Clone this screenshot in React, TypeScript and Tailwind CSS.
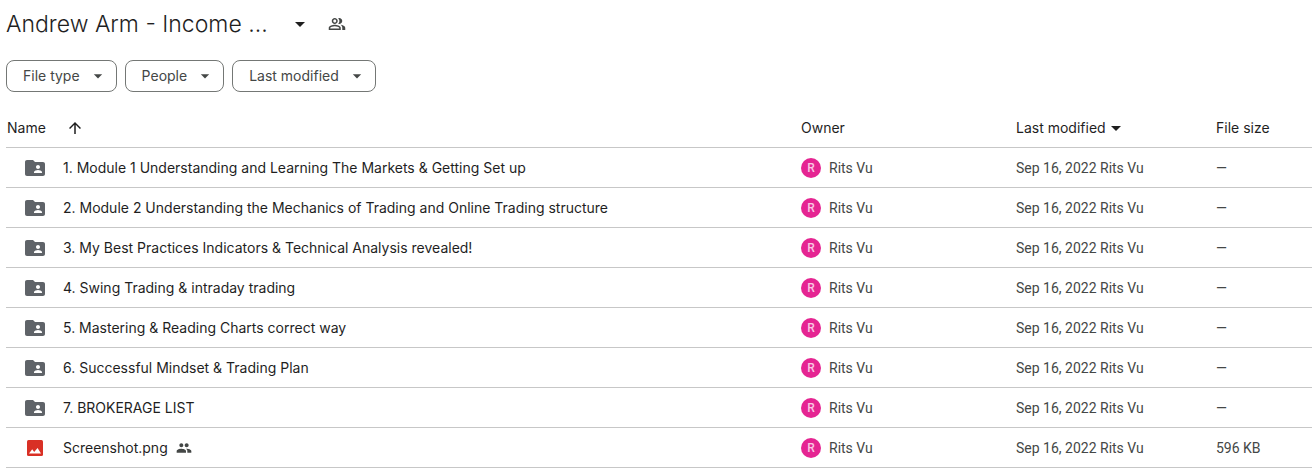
import { FC } from "react";
import {
  MdArrowDropDown,
  MdArrowUpward,
  MdFolderShared,
  MdOutlinePeopleAlt,
  MdPeople,
} from "react-icons/md";

interface DriveFile {
  name: string;
  size: string;
  image?: boolean;
}

const files: DriveFile[] = [
  {
    name: "1. Module 1 Understanding and Learning The Markets & Getting Set up",
    size: "—",
  },
  {
    name: "2. Module 2 Understanding the Mechanics of Trading and Online Trading structure",
    size: "—",
  },
  {
    name: "3. My Best Practices Indicators & Technical Analysis revealed!",
    size: "—",
  },
  { name: "4. Swing Trading & intraday trading", size: "—" },
  { name: "5. Mastering & Reading Charts correct way", size: "—" },
  { name: "6. Successful Mindset & Trading Plan", size: "—" },
  { name: "7. BROKERAGE LIST", size: "—" },
  { name: "Screenshot.png", size: "596 KB", image: true },
];

const filters = ["File type", "People", "Last modified"];

const ImageIcon: FC = () => (
  <svg viewBox="0 0 16 16" className="mx-1 size-4" aria-hidden="true">
    <rect width="16" height="16" rx="1.5" fill="#d93025" />
    <path d="M2 13.5 5.2 9.3l2 2.6 1-1.2L10.6 8 14 13.5z" fill="#fff" />
  </svg>
);

const FileRow: FC<{ file: DriveFile }> = ({ file }) => (
  <tr className="h-10 font-['Roboto',sans-serif] text-[#444746] *:border-b *:border-[#c7c7c7]">
    <td>
      <div className="flex items-center pl-[17px] font-['Inter',sans-serif] text-[#1f1f1f]">
        {file.image ? (
          <ImageIcon />
        ) : (
          <MdFolderShared className="size-6 text-[#5f6368]" />
        )}
        <span className="ml-4">{file.name}</span>
        {file.image && <MdPeople className="ml-2 size-4 text-[#444746]" />}
      </div>
    </td>
    <td>
      <div className="flex items-center gap-2">
        <span className="flex size-5 items-center justify-center rounded-full bg-[#e52592] text-xs font-medium text-white/75">
          R
        </span>
        <span>Rits Vu</span>
      </div>
    </td>
    <td>
      <span>Sep 16, 2022</span> <span>Rits Vu</span>
    </td>
    <td>{file.size}</td>
  </tr>
);

const App: FC = () => {
  return (
    <main className="bg-white pl-1.5 font-['Inter',sans-serif] text-sm text-[#1f1f1f]">
      <header className="flex h-12 items-center">
        <h1 className="text-[23px] font-light">
          <button type="button" className="flex items-center gap-5">
            Andrew Arm - Income ...
            <MdArrowDropDown className="size-6" />
          </button>
        </h1>
        <button type="button" aria-label="Manage access" className="ml-4">
          <MdOutlinePeopleAlt className="size-[18px] text-[#444746]" />
        </button>
      </header>

      <div className="flex gap-2 pt-3 pb-4">
        {filters.map((filter) => (
          <button
            key={filter}
            type="button"
            className="flex h-8 items-center gap-2 rounded-lg border border-[#747775] pr-2 pl-4 text-[#444746]"
          >
            {filter}
            <MdArrowDropDown className="size-5" />
          </button>
        ))}
      </div>

      <table className="w-full table-fixed border-separate border-spacing-0 text-left">
        <thead>
          <tr className="h-10 *:border-b *:border-[#c7c7c7]">
            <th className="pl-px font-normal">
              <button type="button" className="flex items-center gap-5">
                Name
                <MdArrowUpward className="size-[18px]" />
              </button>
            </th>
            <th className="w-[215px] font-normal">Owner</th>
            <th className="w-[200px] font-normal">
              <button type="button" className="flex items-center">
                Last modified
                <MdArrowDropDown className="-ml-0.5 size-6" />
              </button>
            </th>
            <th className="w-24 font-normal">File size</th>
          </tr>
        </thead>
        <tbody>
          {files.map((file) => (
            <FileRow key={file.name} file={file} />
          ))}
        </tbody>
      </table>
    </main>
  );
};

export default App;
